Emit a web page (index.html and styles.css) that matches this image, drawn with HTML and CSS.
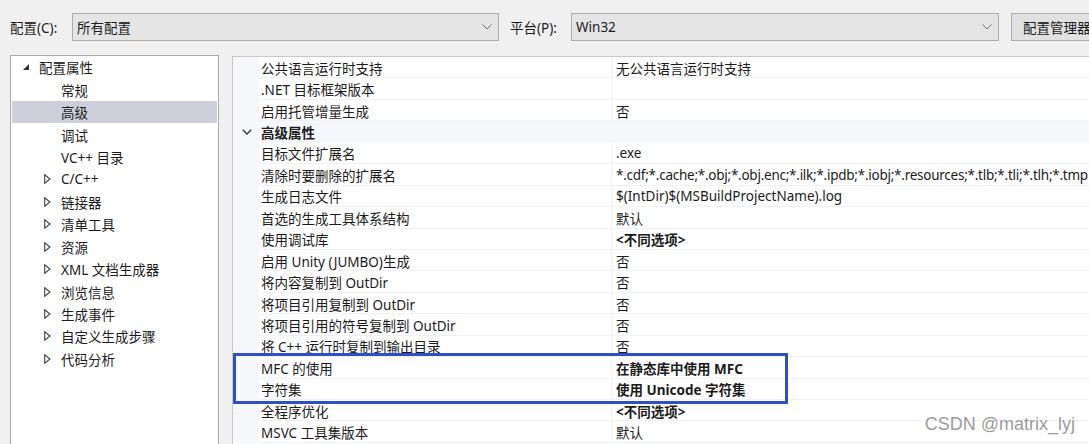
FILE: index.html
```html
<!DOCTYPE html>
<html lang="zh-CN">
<head>
<meta charset="UTF-8">
<title>属性页</title>
<link rel="stylesheet" href="styles.css">
</head>
<body>

<div class="toolbar">
  <span class="label lbl-config">配置(C):</span>
  <div class="combo combo-config">
    <span class="combo-text">所有配置</span>
    <svg class="combo-arrow" width="10" height="6" viewBox="0 0 10 6"><polyline points="0.5,0.5 5,5 9.5,0.5" fill="none" stroke="#6d6d6d" stroke-width="1"/></svg>
  </div>
  <span class="label lbl-platform">平台(P):</span>
  <div class="combo combo-platform">
    <span class="combo-text">Win32</span>
    <svg class="combo-arrow" width="10" height="6" viewBox="0 0 10 6"><polyline points="0.5,0.5 5,5 9.5,0.5" fill="none" stroke="#6d6d6d" stroke-width="1"/></svg>
  </div>
  <button class="btn">配置管理器</button>
</div>

<div class="main">
  <div class="tree">
    <div class="tree-row lvl0">
      <span class="exp"><svg width="6" height="6" viewBox="0 0 6 6"><polygon points="6,0 6,6 0,6" fill="#333"/></svg></span>
      <span>配置属性</span>
    </div>
    <div class="tree-row lvl1"><span class="exp"></span><span>常规</span></div>
    <div class="tree-row lvl1 selected"><span class="exp"></span><span>高级</span></div>
    <div class="tree-row lvl1"><span class="exp"></span><span>调试</span></div>
    <div class="tree-row lvl1"><span class="exp"></span><span>VC++ 目录</span></div>
    <div class="tree-row lvl1"><span class="exp"><svg class="tri" width="7" height="10" viewBox="0 0 7 10"><polygon points="0.7,0.7 6,5 0.7,9.3" fill="none" stroke="#444" stroke-width="1.1"/></svg></span><span>C/C++</span></div>
    <div class="tree-row lvl1"><span class="exp"><svg class="tri" width="7" height="10" viewBox="0 0 7 10"><polygon points="0.7,0.7 6,5 0.7,9.3" fill="none" stroke="#444" stroke-width="1.1"/></svg></span><span>链接器</span></div>
    <div class="tree-row lvl1"><span class="exp"><svg class="tri" width="7" height="10" viewBox="0 0 7 10"><polygon points="0.7,0.7 6,5 0.7,9.3" fill="none" stroke="#444" stroke-width="1.1"/></svg></span><span>清单工具</span></div>
    <div class="tree-row lvl1"><span class="exp"><svg class="tri" width="7" height="10" viewBox="0 0 7 10"><polygon points="0.7,0.7 6,5 0.7,9.3" fill="none" stroke="#444" stroke-width="1.1"/></svg></span><span>资源</span></div>
    <div class="tree-row lvl1"><span class="exp"><svg class="tri" width="7" height="10" viewBox="0 0 7 10"><polygon points="0.7,0.7 6,5 0.7,9.3" fill="none" stroke="#444" stroke-width="1.1"/></svg></span><span>XML 文档生成器</span></div>
    <div class="tree-row lvl1"><span class="exp"><svg class="tri" width="7" height="10" viewBox="0 0 7 10"><polygon points="0.7,0.7 6,5 0.7,9.3" fill="none" stroke="#444" stroke-width="1.1"/></svg></span><span>浏览信息</span></div>
    <div class="tree-row lvl1"><span class="exp"><svg class="tri" width="7" height="10" viewBox="0 0 7 10"><polygon points="0.7,0.7 6,5 0.7,9.3" fill="none" stroke="#444" stroke-width="1.1"/></svg></span><span>生成事件</span></div>
    <div class="tree-row lvl1"><span class="exp"><svg class="tri" width="7" height="10" viewBox="0 0 7 10"><polygon points="0.7,0.7 6,5 0.7,9.3" fill="none" stroke="#444" stroke-width="1.1"/></svg></span><span>自定义生成步骤</span></div>
    <div class="tree-row lvl1"><span class="exp"><svg class="tri" width="7" height="10" viewBox="0 0 7 10"><polygon points="0.7,0.7 6,5 0.7,9.3" fill="none" stroke="#444" stroke-width="1.1"/></svg></span><span>代码分析</span></div>
  </div>

  <div class="grid">
    <div class="prop"><span class="gut"></span><span class="name">公共语言运行时支持</span><span class="val">无公共语言运行时支持</span></div>
    <div class="prop"><span class="gut"></span><span class="name">.NET 目标框架版本</span><span class="val"></span></div>
    <div class="prop"><span class="gut"></span><span class="name">启用托管增量生成</span><span class="val">否</span></div>
    <div class="prop cat">
      <span class="gut"><svg width="10" height="6" viewBox="0 0 10 6"><polyline points="0.8,0.8 5,5 9.2,0.8" fill="none" stroke="#333" stroke-width="1.3"/></svg></span>
      <span class="name">高级属性</span>
    </div>
    <div class="prop"><span class="gut"></span><span class="name">目标文件扩展名</span><span class="val">.exe</span></div>
    <div class="prop"><span class="gut"></span><span class="name">清除时要删除的扩展名</span><span class="val narrow">*.cdf;*.cache;*.obj;*.obj.enc;*.ilk;*.ipdb;*.iobj;*.resources;*.tlb;*.tli;*.tlh;*.tmp</span></div>
    <div class="prop"><span class="gut"></span><span class="name">生成日志文件</span><span class="val">$(IntDir)$(MSBuildProjectName).log</span></div>
    <div class="prop"><span class="gut"></span><span class="name">首选的生成工具体系结构</span><span class="val">默认</span></div>
    <div class="prop"><span class="gut"></span><span class="name">使用调试库</span><span class="val b">&lt;不同选项&gt;</span></div>
    <div class="prop"><span class="gut"></span><span class="name">启用 Unity (JUMBO)生成</span><span class="val">否</span></div>
    <div class="prop"><span class="gut"></span><span class="name">将内容复制到 OutDir</span><span class="val">否</span></div>
    <div class="prop"><span class="gut"></span><span class="name">将项目引用复制到 OutDir</span><span class="val">否</span></div>
    <div class="prop"><span class="gut"></span><span class="name">将项目引用的符号复制到 OutDir</span><span class="val">否</span></div>
    <div class="prop"><span class="gut"></span><span class="name">将 C++ 运行时复制到输出目录</span><span class="val">否</span></div>
    <div class="prop"><span class="gut"></span><span class="name">MFC 的使用</span><span class="val b">在静态库中使用 MFC</span></div>
    <div class="prop"><span class="gut"></span><span class="name">字符集</span><span class="val b">使用 Unicode 字符集</span></div>
    <div class="prop"><span class="gut"></span><span class="name">全程序优化</span><span class="val b">&lt;不同选项&gt;</span></div>
    <div class="prop"><span class="gut"></span><span class="name">MSVC 工具集版本</span><span class="val">默认</span></div>

    <div class="mark"></div>
  </div>
</div>

<div class="watermark">CSDN @matrix_lyj</div>

</body>
</html>
```

FILE: styles.css
```css
html, body {
  height: 100%;
}

body {
  margin: 0;
  background: #f0f0f0;
  font-family: "Noto Sans", "Noto Sans CJK SC", sans-serif;
  font-size: 13.5px;
  color: #1b1b1b;
  overflow: hidden;
  position: relative;
}

.toolbar {
  display: flex;
  align-items: center;
  height: 28px;
  padding: 13px 0 0 10px;
  overflow: hidden;
}

.toolbar > * {
  flex: none;
}

.label {
  white-space: nowrap;
}

.lbl-config {
  width: 62px;
}

.lbl-platform {
  width: 61px;
  margin-left: 11px;
}

.combo {
  box-sizing: border-box;
  height: 28px;
  background: #e5e5e5;
  border: 1px solid #adadad;
  display: flex;
  align-items: center;
  padding: 0 6px 0 4px;
}

.combo-config {
  width: 427px;
}

.combo-platform {
  width: 428px;
}

.combo-text {
  flex: 1;
}

.btn {
  box-sizing: border-box;
  height: 28px;
  margin-left: 12px;
  padding: 0 11px;
  min-width: 90px;
  text-align: left;
  background: #e1e1e1;
  border: 1px solid #adadad;
  border-right: none;
  font: inherit;
  color: inherit;
  white-space: nowrap;
}

.main {
  display: flex;
  gap: 13px;
  margin-top: 14px;
  padding-left: 10px;
  height: 400px;
}

/* 左侧树 */
.tree {
  box-sizing: border-box;
  width: 209px;
  flex: none;
  background: #fff;
  border: 1px solid #a9a9a9;
  border-bottom: none;
  padding: 0 1px;
}

.tree-row {
  display: flex;
  align-items: center;
  height: 22.45px;
  white-space: nowrap;
}

.tree-row.lvl0 { padding-left: 5px; }
.tree-row.lvl1 { padding-left: 27px; }

.tree-row.selected {
  background: #cdd0dc;
}

.exp {
  width: 17px;
  margin-right: 5px;
  display: flex;
  justify-content: center;
  align-items: center;
}

/* 属性表格 */
.grid {
  flex: 1;
  min-width: 0;
  margin-top: 1px;
  background: #fff;
  border-top: 1px solid #c8c8c8;
  border-left: 1px solid #c8c8c8;
  position: relative;
  overflow: hidden;
}

.prop {
  display: flex;
  height: 21.45px;
  box-sizing: border-box;
  border-bottom: 1px solid #eef1f7;
  white-space: nowrap;
}

.gut {
  width: 26px;
  flex: none;
  background: #f5f7fb;
  display: flex;
  align-items: center;
  justify-content: center;
  margin-bottom: -1px;
}

.name {
  width: 350px;
  flex: none;
  padding: 1px 0 0 2px;
  border-right: 1px solid #eef1f7;
  display: flex;
  align-items: center;
}

.val {
  flex: 1;
  min-width: 0;
  padding: 1px 0 0 4px;
  overflow: hidden;
  display: flex;
  align-items: center;
}

.val.narrow {
  letter-spacing: -0.25px;
}

.b, .cat .name {
  font-weight: bold;
}

.prop.cat {
  background: #f5f7fb;
  border-bottom-color: #f5f7fb;
}

.prop.cat .name {
  border-right: none;
}

.gut svg {
  margin-left: 1px;
}

/* 蓝色标注框 */
.mark {
  position: absolute;
  left: 0;
  top: 296px;
  width: 555px;
  height: 51px;
  box-sizing: border-box;
  border: 3px solid #2e4fc8;
}

.watermark {
  position: absolute;
  right: 14px;
  bottom: 9px;
  font-family: "Liberation Sans", "Noto Sans", sans-serif;
  font-size: 18px;
  color: #9c9c9c;
}
```
